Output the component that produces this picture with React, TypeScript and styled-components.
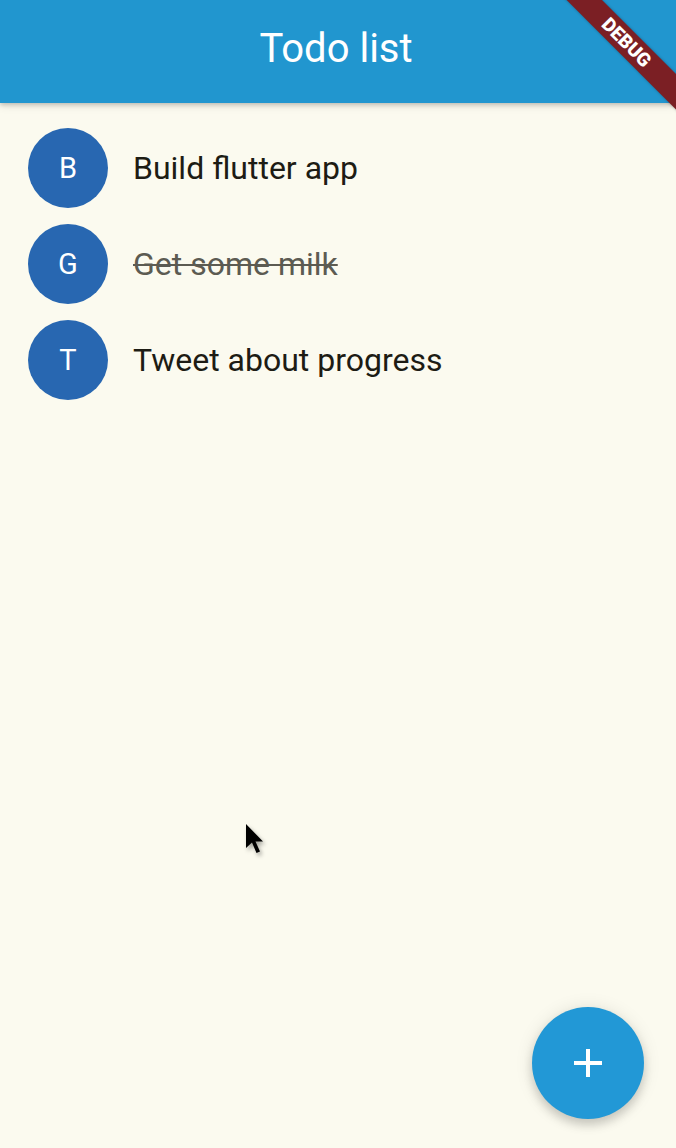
import React from "react";
import styled, { createGlobalStyle } from "styled-components";

const GlobalStyle = createGlobalStyle`
  html, body {
    margin: 0;
    padding: 0;
    background: #fbfaef;
    font-family: Roboto, "Noto Sans", "Liberation Sans", sans-serif;
  }
  * { box-sizing: border-box; }
`;

const Screen = styled.div`
  position: relative;
  width: 676px;
  height: 1148px;
  overflow: hidden;
  background: #fbfaef;
  display: flex;
  flex-direction: column;
`;

const AppBar = styled.header`
  position: relative;
  z-index: 1;
  height: 103px;
  flex: 0 0 103px;
  background: #2196cf;
  box-shadow: 0 2px 4px rgba(0, 0, 0, 0.18), 0 4px 8px rgba(0, 0, 0, 0.08);
  display: flex;
  justify-content: center;
  align-items: flex-start;
  padding-top: 25px;
  padding-right: 4px;
`;

const Title = styled.h1`
  margin: 0;
  font-family: Roboto, "Noto Sans", sans-serif;
  font-weight: 400;
  font-size: 40px;
  line-height: 47px;
  color: #ffffff;
`;

const List = styled.ul`
  list-style: none;
  margin: 0;
  padding: 17px 0 0 0;
  display: flex;
  flex-direction: column;
`;

const Row = styled.li`
  height: 96px;
  display: flex;
  align-items: center;
  padding-left: 28px;
  gap: 25px;
`;

const Avatar = styled.div`
  width: 80px;
  height: 80px;
  flex: 0 0 80px;
  border-radius: 50%;
  background: #2867b1;
  color: #ffffff;
  display: flex;
  align-items: center;
  justify-content: center;
  font-family: Roboto, sans-serif;
  font-size: 29px;
  line-height: 1;
`;

const ItemText = styled.span<{ $done?: boolean }>`
  font-family: Roboto, sans-serif;
  font-size: 32px;
  line-height: 38px;
  color: ${(p) => (p.$done ? "#5c5b52" : "#1d1c14")};
  text-decoration: ${(p) => (p.$done ? "line-through" : "none")};
  text-decoration-thickness: 2px;
  text-decoration-color: #5c5b52;
`;

const Banner = styled.div`
  position: absolute;
  z-index: 5;
  top: 30px;
  left: 547px;
  width: 170px;
  height: 25px;
  background: #7b1f24;
  transform: rotate(45deg);
  transform-origin: 80px 12px;
  display: flex;
  align-items: center;
  justify-content: center;
  padding-right: 10px;
  color: #ffffff;
  font-family: Roboto, "Liberation Sans", sans-serif;
  font-weight: 900;
  font-size: 19px;
  line-height: 1;
  box-shadow: 0 0 3px rgba(0, 0, 0, 0.3);
`;

const Fab = styled.button`
  position: absolute;
  right: 32px;
  bottom: 29px;
  width: 112px;
  height: 112px;
  border: none;
  border-radius: 50%;
  background: #2298d6;
  box-shadow: 0 6px 10px rgba(0, 0, 0, 0.16), 0 1px 18px rgba(0, 0, 0, 0.1);
  display: flex;
  align-items: center;
  justify-content: center;
  padding: 0;
  cursor: pointer;
`;

const Pointer = styled.svg`
  position: absolute;
  left: 245px;
  top: 823px;
  z-index: 10;
  filter: drop-shadow(2px 3px 2px rgba(0, 0, 0, 0.35));
`;

const todos = [
  { letter: "B", text: "Build flutter app", done: false },
  { letter: "G", text: "Get some milk", done: true },
  { letter: "T", text: "Tweet about progress", done: false },
];

export default function App() {
  return (
    <>
      <GlobalStyle />
      <Screen>
        <AppBar>
          <Title>Todo list</Title>
        </AppBar>
        <List>
          {todos.map((t) => (
            <Row key={t.text}>
              <Avatar>{t.letter}</Avatar>
              <ItemText $done={t.done}>{t.text}</ItemText>
            </Row>
          ))}
        </List>
        <Banner>DEBUG</Banner>
        <Fab aria-label="Add">
          <svg width="30" height="30" viewBox="0 0 30 30">
            <path d="M15 1 V29 M1 15 H29" stroke="#ffffff" strokeWidth="4" fill="none" />
          </svg>
        </Fab>
        <Pointer width="20" height="32" viewBox="0 0 20 32">
          <path d="M1 1 L1 25 L7 19.5 L11.5 30 L15 28.5 L10.5 18.5 L18 18.5 Z" fill="#000000" />
        </Pointer>
      </Screen>
    </>
  );
}
